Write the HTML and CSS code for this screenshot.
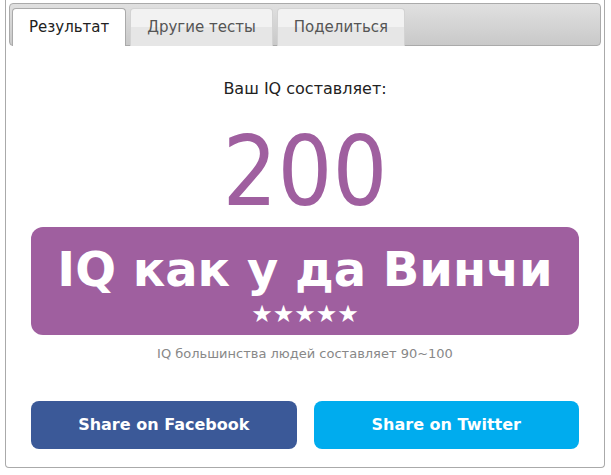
FILE: index.html
```html
<!DOCTYPE html>
<html lang="ru">
<head>
    <meta charset="UTF-8">
    <meta name="viewport" content="width=device-width, initial-scale=1.0">
    <title>Результат IQ теста</title>
    <link rel="stylesheet" href="styles.css">
</head>
<body>
    <div class="panel">
        <div class="tabs">
            <div class="tab active">Результат</div>
            <div class="tab">Другие тесты</div>
            <div class="tab">Поделиться</div>
        </div>

        <div class="result">
            <div class="label">Ваш IQ составляет:</div>
            <div class="score">200</div>
            <div class="badge">
                <div class="badge-title">IQ как у да Винчи</div>
                <div class="stars">★★★★★</div>
            </div>
            <div class="note">IQ большинства людей составляет 90~100</div>
        </div>

        <div class="share">
            <a class="share-btn facebook" href="#">Share on Facebook</a>
            <a class="share-btn twitter" href="#">Share on Twitter</a>
        </div>
    </div>
</body>
</html>
```

FILE: styles.css
```css
* {
    box-sizing: border-box;
    margin: 0;
    padding: 0;
}

body {
    background: #fff;
    font-family: "DejaVu Sans", sans-serif;
}

.panel {
    margin-left: 5px;
    width: 600px;
    height: 468px;
    border: 1px solid #aaa;
    border-top: none;
    border-radius: 0 0 4px 4px;
    padding: 3px 3px 0 3px;
}

.tabs {
    display: flex;
    gap: 4px;
    height: 43px;
    padding: 4px 2px 0 2px;
    border: 1px solid #aaa;
    border-radius: 4px;
    background: linear-gradient(#e0e0e0, #c9c9c9);
}

.tab {
    height: 38px;
    padding: 0 16px;
    line-height: 37px;
    font-size: 15px;
    color: #555;
    border: 1px solid #d3d3d3;
    border-bottom: none;
    border-radius: 4px 4px 0 0;
    background: linear-gradient(#f2f2f2 50%, #e6e6e6 50%);
}

.tab.active {
    background: #fff;
    color: #212121;
    border-color: #aaa;
}

.result {
    padding: 0 22px;
    text-align: center;
}

.label {
    margin-top: 33px;
    font-size: 16px;
    color: #222;
}

.score {
    margin-top: 24px;
    font-family: "DejaVu Sans Condensed", "DejaVu Sans", sans-serif;
    font-size: 96px;
    line-height: 100px;
    color: #9f5f9f;
}

.badge {
    height: 108px;
    margin-top: 5px;
    padding-top: 14px;
    border-radius: 12px;
    background: #9f5f9f;
    color: #fff;
}

.badge-title {
    font-size: 48px;
    font-weight: bold;
    line-height: 56px;
}

.stars {
    margin-top: 4px;
    font-size: 24px;
    line-height: 26px;
}

.note {
    margin-top: 11px;
    font-size: 13px;
    color: #888;
}

.share {
    display: flex;
    gap: 17px;
    padding: 0 22px;
    margin-top: 40px;
}

.share-btn {
    flex: 1;
    height: 48px;
    line-height: 48px;
    border-radius: 8px;
    text-align: center;
    color: #fff;
    font-size: 16px;
    font-weight: bold;
    text-decoration: none;
}

.facebook {
    background: #3b5998;
}

.twitter {
    background: #00acee;
}
```
